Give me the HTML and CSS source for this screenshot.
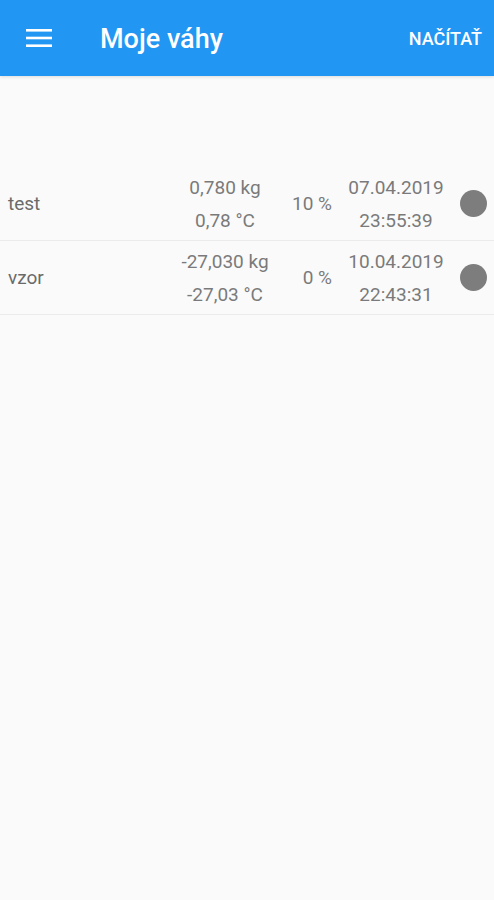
FILE: index.html
```html
<!DOCTYPE html>
<html lang="cs">
<head>
<meta charset="utf-8">
<title>Moje váhy</title>
<link rel="stylesheet" href="styles.css">
</head>
<body>
<header class="toolbar">
  <button class="menu-btn" aria-label="Menu">
    <svg width="26" height="18" viewBox="0 0 26 18"><rect x="0" y="0" width="26" height="2.6" fill="#fff"/><rect x="0" y="7.7" width="26" height="2.6" fill="#fff"/><rect x="0" y="15.4" width="26" height="2.6" fill="#fff"/></svg>
  </button>
  <h1 class="title">Moje váhy</h1>
  <span class="action">NAČÍTAŤ</span>
</header>
<main class="list">
  <div class="row">
    <div class="name">test</div>
    <div class="cell two"><span>0,780 kg</span><span>0,78 °C</span></div>
    <div class="cell pct">10 %</div>
    <div class="cell two"><span>07.04.2019</span><span>23:55:39</span></div>
    <div class="dot-cell"><span class="dot"></span></div>
  </div>
  <div class="row">
    <div class="name">vzor</div>
    <div class="cell two"><span>-27,030 kg</span><span>-27,03 °C</span></div>
    <div class="cell pct">0 %</div>
    <div class="cell two"><span>10.04.2019</span><span>22:43:31</span></div>
    <div class="dot-cell"><span class="dot"></span></div>
  </div>
</main>
</body>
</html>
```
FILE: styles.css
```css
html, body {
  margin: 0;
  padding: 0;
  background: #fafafa;
  font-family: Roboto, "Liberation Sans", sans-serif;
}
.toolbar {
  height: 76px;
  background: #2196f3;
  display: flex;
  align-items: center;
  color: #fff;
  box-shadow: 0 1px 3px rgba(0,0,0,0.12);
}
.menu-btn {
  margin-left: 26px;
  width: 26px;
  height: 18px;
  padding: 0;
  border: 0;
  background: none;
  display: flex;
}
.title {
  margin: 2px 0 0 48px;
  font-size: 27px;
  font-weight: 500;
  flex: 1;
  line-height: 1;
}
.action {
  font-size: 18px;
  font-weight: 500;
  margin-right: 12px;
}
.list {
  padding-top: 91px;
}
.row {
  display: grid;
  grid-template-columns: 1fr 100px 74px 94px 44px;
  align-items: center;
  height: 73px;
  padding: 0 7px 0 8px;
  border-bottom: 1px solid #ebebeb;
  color: #7a7a7a;
  font-size: 19px;
}
.name {
  color: #6a6a6a;
}
.cell {
  text-align: center;
}
.pct {
  text-align: right;
  padding-right: 17px;
}
.two {
  display: flex;
  flex-direction: column;
  align-items: center;
  line-height: 33px;
}
.dot-cell {
  display: flex;
  justify-content: flex-end;
}
.dot {
  width: 27px;
  height: 27px;
  border-radius: 50%;
  background: #7d7d7d;
}
```
